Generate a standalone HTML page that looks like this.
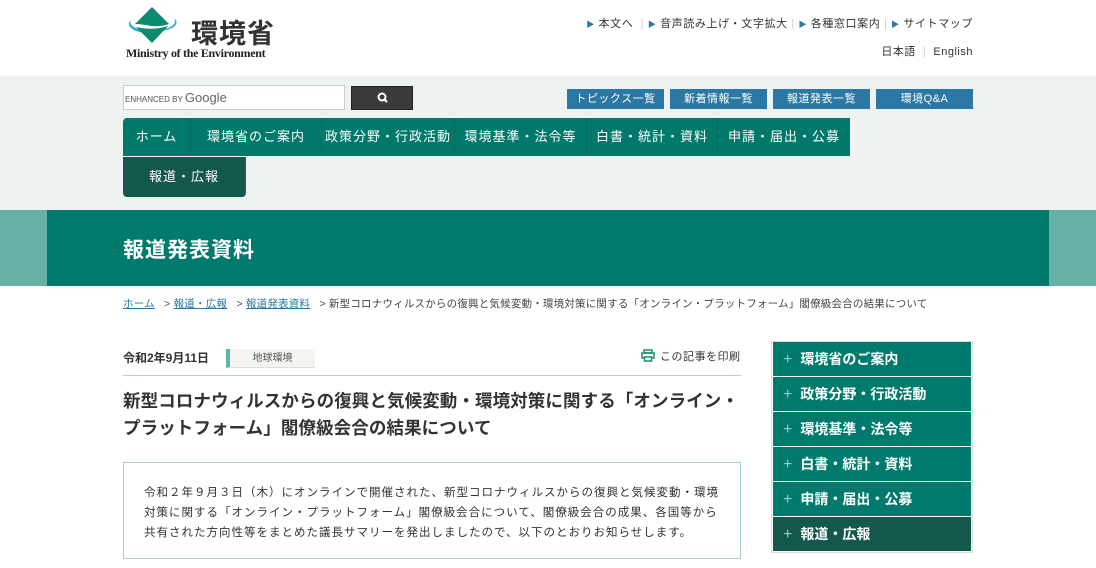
<!DOCTYPE html>
<html><head><meta charset="utf-8"><style>
*{margin:0;padding:0;box-sizing:border-box}
body{width:1096px;height:568px;overflow:hidden;background:#fff;font-family:"Liberation Sans","Noto Sans CJK JP",sans-serif;color:#333;position:relative}
.a{position:absolute}
.band{left:0;top:76px;width:1096px;height:134px;background:#eef3f1}
.tab{position:absolute;top:118px;height:38px;color:#fff;font-size:13px;line-height:38px;text-align:center;background:#00796b;border-right:1px solid #0b6a5d;letter-spacing:1px}
.btn{position:absolute;top:89px;height:20px;width:97px;background:#2a78a3;color:#fff;font-size:11px;line-height:20px;text-align:center;letter-spacing:0.5px}
.side{position:absolute;left:773px;width:198px;height:34px;background:#007a6c;color:#fff;font-size:14px;font-weight:bold;line-height:34px;padding-left:10px}
.side span{color:#9cc9bf;margin-right:8px;font-weight:normal;font-size:16px}
</style></head><body>
<svg class="a" style="left:124px;top:6px" width="56" height="40" viewBox="0 0 56 40">
<path d="M7 14 Q1 20 12 25 Q28 30 48 22 Q56 17 50 12 Q54 18 44 22 Q28 27 14 23 Q4 19 7 14Z" fill="#2aa7dc"/>
<path d="M28 1 L45 18 Q34 22 22 19 Q16 18 11 18Z M12 21 Q28 25 44 20 L28 37Z" fill="#0e8a6e"/>
</svg>
<div class="a" style="left:191px;top:12px;font-size:27px;font-weight:bold;color:#333;letter-spacing:1px">環境省</div>
<div class="a" style="left:126px;top:46px;font-family:'Liberation Serif',serif;font-size:12px;font-weight:bold;color:#222;letter-spacing:-0.3px">Ministry of the Environment</div>
<div class="a" style="right:123px;top:15px;font-size:11px;color:#333;white-space:nowrap;letter-spacing:0.6px">
<span style="color:#2a78a3;font-size:8px">▶</span> 本文へ <span style="color:#ccc">&nbsp;|&nbsp;</span><span style="color:#2a78a3;font-size:8px">▶</span> 音声読み上げ・文字拡大 <span style="color:#ccc">|&nbsp;</span><span style="color:#2a78a3;font-size:8px">▶</span> 各種窓口案内 <span style="color:#ccc">|&nbsp;</span><span style="color:#2a78a3;font-size:8px">▶</span> サイトマップ</div>
<div class="a" style="right:123px;top:43px;font-size:11px;letter-spacing:0.5px">日本語 <span style="color:#ccc">&nbsp;|&nbsp;</span> English</div>
<div class="a band"></div>
<div class="a" style="left:123px;top:85px;width:222px;height:25px;background:#fff;border:1px solid #ccc;font-size:8px;line-height:23px;padding-left:1px;color:#555">ENHANCED BY <span style="font-size:13px;color:#666">Google</span></div>
<div class="a" style="left:351px;top:86px;width:62px;height:24px;background:#3a3a3a;border:1px solid #222"><svg width="62" height="22" viewBox="0 0 62 22"><circle cx="30" cy="10" r="3.5" stroke="#fff" stroke-width="2" fill="none"/><path d="M32.5 12.5 L35 15" stroke="#fff" stroke-width="2.2"/></svg></div>
<div class="btn" style="left:567px">トピックス一覧</div>
<div class="btn" style="left:670px">新着情報一覧</div>
<div class="btn" style="left:773px">報道発表一覧</div>
<div class="btn" style="left:876px">環境Q&amp;A</div>
<div class="tab" style="left:123px;width:68px;border-radius:4px 0 0 0">ホーム</div>
<div class="tab" style="left:191px;width:131px">環境省のご案内</div>
<div class="tab" style="left:322px;width:133px">政策分野・行政活動</div>
<div class="tab" style="left:455px;width:132px">環境基準・法令等</div>
<div class="tab" style="left:587px;width:131px">白書・統計・資料</div>
<div class="tab" style="left:718px;width:132px;border-right:none">申請・届出・公募</div>
<div class="tab" style="left:123px;top:157px;height:40px;line-height:40px;width:123px;background:#14574b;border-radius:0 0 4px 4px">報道・広報</div>
<div class="a" style="left:0;top:210px;width:1096px;height:76px;background:#007a6c"></div>
<div class="a" style="left:0;top:210px;width:47px;height:76px;background:#66b1a6"></div>
<div class="a" style="left:1049px;top:210px;width:47px;height:76px;background:#66b1a6"></div>
<div class="a" style="left:123px;top:234px;font-size:21px;font-weight:bold;color:#fff;letter-spacing:1px">報道発表資料</div>
<div class="a" style="left:123px;top:296px;font-size:10.5px;color:#444;white-space:nowrap;letter-spacing:0.2px"><u style="color:#2a78a3">ホーム</u> &nbsp;&nbsp;&gt; <u style="color:#2a78a3">報道・広報</u> &nbsp;&nbsp;&gt; <u style="color:#2a78a3">報道発表資料</u> &nbsp;&nbsp;&gt; 新型コロナウィルスからの復興と気候変動・環境対策に関する「オンライン・プラットフォーム」閣僚級会合の結果について</div>
<div class="a" style="left:123px;top:349px;font-size:12px;font-weight:bold">令和2年9月11日</div>
<div class="a" style="left:226px;top:349px;width:89px;height:19px;background:#f4f4f0;border-left:4px solid #5ab9ac;border-bottom:1px solid #ddd;font-size:10px;line-height:19px;text-align:center;color:#555">地球環境</div>
<svg class="a" style="left:641px;top:349px" width="14" height="13" viewBox="0 0 14 13"><rect x="3" y="1" width="8" height="3" fill="none" stroke="#1a8a72" stroke-width="1.5"/><rect x="1" y="4" width="12" height="5" fill="none" stroke="#1a8a72" stroke-width="1.5"/><rect x="3.5" y="8" width="7" height="4" fill="#fff" stroke="#1a8a72" stroke-width="1.5"/></svg>
<div class="a" style="left:660px;top:348px;font-size:11px;letter-spacing:0.5px">この記事を印刷</div>
<div class="a" style="left:123px;top:375px;width:618px;height:1px;background:#b8d0d0"></div>
<div class="a" style="left:123px;top:388px;width:622px;font-size:17.5px;font-weight:bold;line-height:27px;color:#333;letter-spacing:0.1px">新型コロナウィルスからの復興と気候変動・環境対策に関する「オンライン・<br>プラットフォーム」閣僚級会合の結果について</div>
<div class="a" style="left:123px;top:462px;width:618px;height:97px;border:1px solid #a6d2ca;padding:20px 20px 0 20px;font-size:11.5px;line-height:20px;letter-spacing:1px;color:#333">令和２年９月３日（木）にオンラインで開催された、新型コロナウィルスからの復興と気候変動・環境対策に関する「オンライン・プラットフォーム」閣僚級会合について、閣僚級会合の成果、各国等から共有された方向性等をまとめた議長サマリーを発出しましたので、以下のとおりお知らせします。</div>
<div class="a" style="left:771px;top:341px;width:202px;height:212px;border:1px solid #ddd"></div>
<div class="side" style="top:342px"><span>+</span>環境省のご案内</div>
<div class="side" style="top:377px"><span>+</span>政策分野・行政活動</div>
<div class="side" style="top:412px"><span>+</span>環境基準・法令等</div>
<div class="side" style="top:447px"><span>+</span>白書・統計・資料</div>
<div class="side" style="top:482px"><span>+</span>申請・届出・公募</div>
<div class="side" style="top:517px;background:#14574b"><span>+</span>報道・広報</div>
</body></html>
